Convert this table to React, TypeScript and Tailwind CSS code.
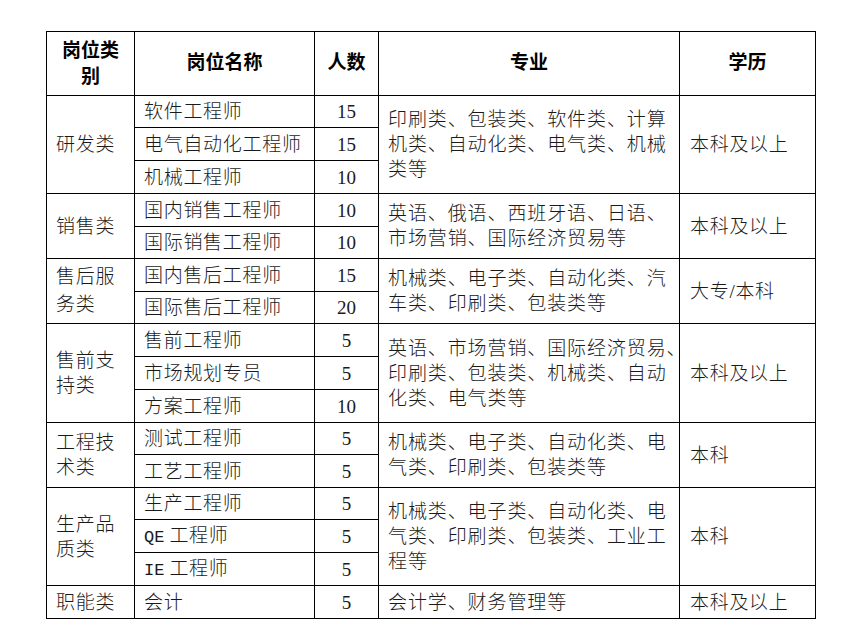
import React from "react";

type Row = {
  cat?: { lines: string[]; span: number; lh?: string };
  name: React.ReactNode;
  num: string;
  major?: { lines: string[]; span: number };
  edu?: { text: string; span: number };
  h: number;
};

const Latin = ({ t }: { t: string }) => (
  <span className="font-['Liberation_Mono',monospace] text-[17px] font-normal tracking-normal mr-[5px]">{t}</span>
);

const rows: Row[] = [
  { cat: { lines: ["研发类"], span: 3 }, name: "软件工程师", num: "15", major: { lines: ["印刷类、包装类、软件类、计算", "机类、自动化类、电气类、机械", "类等"], span: 3 }, edu: { text: "本科及以上", span: 3 }, h: 32 },
  { name: "电气自动化工程师", num: "15", h: 33 },
  { name: "机械工程师", num: "10", h: 33 },
  { cat: { lines: ["销售类"], span: 2 }, name: "国内销售工程师", num: "10", major: { lines: ["英语、俄语、西班牙语、日语、", "市场营销、国际经济贸易等"], span: 2 }, edu: { text: "本科及以上", span: 2 }, h: 33 },
  { name: "国际销售工程师", num: "10", h: 32 },
  { cat: { lines: ["售后服", "务类"], span: 2, lh: "leading-[28px]" }, name: "国内售后工程师", num: "15", major: { lines: ["机械类、电子类、自动化类、汽", "车类、印刷类、包装类等"], span: 2 }, edu: { text: "大专/本科", span: 2 }, h: 33 },
  { name: "国际售后工程师", num: "20", h: 32 },
  { cat: { lines: ["售前支", "持类"], span: 3 }, name: "售前工程师", num: "5", major: { lines: ["英语、市场营销、国际经济贸易、", "印刷类、包装类、机械类、自动", "化类、电气类等"], span: 3 }, edu: { text: "本科及以上", span: 3 }, h: 33 },
  { name: "市场规划专员", num: "5", h: 33 },
  { name: "方案工程师", num: "10", h: 33 },
  { cat: { lines: ["工程技", "术类"], span: 2 }, name: "测试工程师", num: "5", major: { lines: ["机械类、电子类、自动化类、电", "气类、印刷类、包装类等"], span: 2 }, edu: { text: "本科", span: 2 }, h: 32 },
  { name: "工艺工程师", num: "5", h: 33 },
  { cat: { lines: ["生产品", "质类"], span: 3 }, name: "生产工程师", num: "5", major: { lines: ["机械类、电子类、自动化类、电", "气类、印刷类、包装类、工业工", "程等"], span: 3 }, edu: { text: "本科", span: 3 }, h: 32 },
  { name: <><Latin t="QE" />工程师</>, num: "5", h: 33 },
  { name: <><Latin t="IE" />工程师</>, num: "5", h: 33 },
  { cat: { lines: ["职能类"], span: 1 }, name: "会计", num: "5", major: { lines: ["会计学、财务管理等"], span: 1 }, edu: { text: "本科及以上", span: 1 }, h: 33 },
];

const cell = "border border-black align-middle whitespace-nowrap p-0";

export default function App() {
  return (
    <div className="w-[847px] h-[629px] bg-white pt-[31px] pl-[46px] font-['Liberation_Serif','Noto_Sans_CJK_SC',serif] text-[19px] font-light text-[#1a1a1a]">
      <table className="table-fixed border-collapse w-[769px]">
        <colgroup>
          <col className="w-[88px]" />
          <col className="w-[180px]" />
          <col className="w-[64px]" />
          <col className="w-[301px]" />
          <col className="w-[136px]" />
        </colgroup>
        <thead>
          <tr className="h-[64px]">
            <th className={`${cell} text-center font-bold leading-[26px] text-black`}>岗位类<br />别</th>
            <th className={`${cell} text-center font-bold text-black`}>岗位名称</th>
            <th className={`${cell} text-center font-bold text-black`}>人数</th>
            <th className={`${cell} text-center font-bold text-black`}>专业</th>
            <th className={`${cell} text-center font-bold text-black`}>学历</th>
          </tr>
        </thead>
        <tbody>
          {rows.map((r, i) => (
            <tr key={i} style={{ height: r.h }}>
              {r.cat && (
                <td rowSpan={r.cat.span} className={`${cell} pl-[9px] tracking-[0.7px] ${r.cat.lh ?? "leading-[25px]"}`}>
                  {r.cat.lines.map((l, j) => (
                    <div key={j}>{l}</div>
                  ))}
                </td>
              )}
              <td className={`${cell} pl-[9px] tracking-[0.7px] leading-[25px]`}>{r.name}</td>
              <td className={`${cell} text-center leading-[25px] font-normal`}>{r.num}</td>
              {r.major && (
                <td rowSpan={r.major.span} className={`${cell} pl-[9px] tracking-[0.9px] leading-[25px]`}>
                  {r.major.lines.map((l, j) => (
                    <div key={j}>{l}</div>
                  ))}
                </td>
              )}
              {r.edu && (
                <td rowSpan={r.edu.span} className={`${cell} pl-[10px] tracking-[0.7px] leading-[25px]`}>{r.edu.text}</td>
              )}
            </tr>
          ))}
        </tbody>
      </table>
    </div>
  );
}
